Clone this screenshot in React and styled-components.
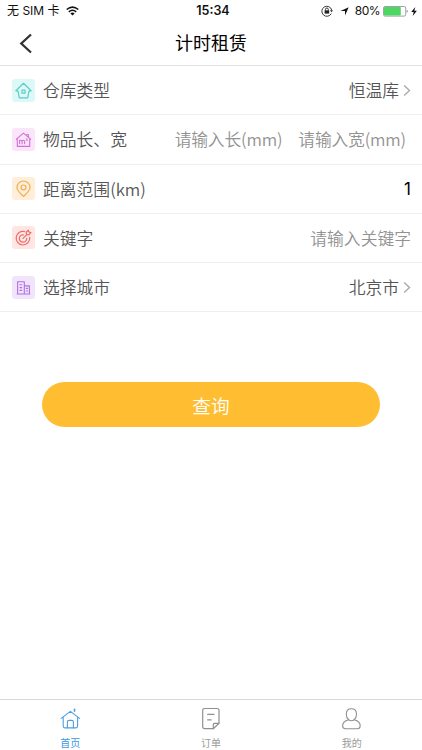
import React from "react";
import styled, { createGlobalStyle } from "styled-components";

const HouseIcon = () => (
  <svg width="17" height="17" viewBox="0 0 17 17" fill="none" stroke="#5fccc8" strokeWidth="1.2" strokeLinejoin="round" strokeLinecap="round">
    <path d="M.9 8.8 8.5 1.3 16.1 8.8 13.9 9.1 12.7 15.9H4.3L3.1 9.1Z" />
    <rect x="7" y="8.2" width="3" height="3" />
  </svg>
);

const AreaIcon = () => (
  <svg width="17" height="17" viewBox="0 0 17 17" fill="none" stroke="#d46fd8" strokeWidth="1.1" strokeLinejoin="round" strokeLinecap="round">
    <path d="M1.4 8.2 8.5 2.2 15.6 8.2M2.3 7.6V15.4H14.7V7.6M11.9 3.5H13.3V6" />
    <path d="M4.6 12.8V9.2M4.6 10.4Q4.9 9.2 5.9 9.2T7.1 10.4V12.8M7.1 10.4Q7.4 9.2 8.4 9.2T9.6 10.4V12.8" />
    <path d="M11.1 7.9H12.3L11.3 9.5H12.4" strokeWidth="0.8" />
  </svg>
);

const PinIcon = () => (
  <svg width="17" height="17" viewBox="0 0 17 17" fill="none" stroke="#f0ae4f" strokeWidth="1.2" strokeLinejoin="round">
    <path d="M8.5 16.4C5.2 13.2 2 10.6 2 7.4A6.5 6.4 0 0 1 15 7.4C15 10.6 11.8 13.2 8.5 16.4Z" />
    <circle cx="8.5" cy="7.4" r="2.4" />
  </svg>
);

const TargetIcon = () => (
  <svg width="17" height="17" viewBox="0 0 17 17" fill="none" stroke="#ee6c6c" strokeWidth="1.2" strokeLinejoin="round" strokeLinecap="round">
    <path d="M9.6 2.6A6.8 6.8 0 1 0 14.7 8.4" />
    <path d="M8.4 5.8A3.7 3.7 0 1 0 11.7 9.4" />
    <path d="M8 9.3 12 5.3M11.5 5.5 11.2 3.2 13.3 1.2 13.9 3 15.9 3.6 13.8 5.8Z" />
  </svg>
);

const CityIcon = () => (
  <svg width="17" height="17" viewBox="0 0 17 17" fill="none" stroke="#b270e0" strokeWidth="1.1" strokeLinejoin="round">
    <path d="M2.6 15V2.7H9.3V15M9.3 6.9H14.4V15M1.8 15H15.2" />
    <path d="M4.5 5.8H7.2M4.5 8.6H7.2M4.5 11.4H7.2M10.8 9.4H13M10.8 12H13" />
  </svg>
);

const WifiIcon = () => (
  <svg width="13" height="10" viewBox="0 0 13 10" fill="none" stroke="#111" strokeWidth="1.6">
    <path d="M.7 3.5Q6.5-1.3 12.3 3.5M2.8 5.8Q6.5 2.7 10.2 5.8" />
    <path d="M4.4 7.4Q6.5 5.7 8.6 7.4L6.5 9.6Z" fill="#111" stroke="none" />
  </svg>
);

const LockIcon = () => (
  <svg width="12" height="12" viewBox="0 0 12 12" fill="none" stroke="#222">
    <path d="M10.3 8.6A5 5 0 1 1 10.7 5" strokeWidth="0.9" />
    <path d="M9 5.2H12L10.5 7.2Z" fill="#222" stroke="none" />
    <rect x="3.6" y="5.3" width="4.6" height="3.3" fill="#222" stroke="none" />
    <path d="M4.5 5.5V4.4A1.4 1.4 0 0 1 7.3 4.4V5.5" strokeWidth="0.9" />
  </svg>
);

const BatteryIcon = () => (
  <svg width="26" height="11" viewBox="0 0 26 11">
    <rect x="0.5" y="0.5" width="22.2" height="9.6" rx="1.5" fill="#fff" stroke="#8a8a8a" strokeWidth="0.8" />
    <rect x="1" y="1" width="16.8" height="8.6" rx="0.8" fill="#4cd764" />
    <path d="M23.8 3.6Q25.6 5.3 23.8 7Z" fill="#555" />
  </svg>
);

const HomeIcon = () => (
  <svg width="22" height="24" viewBox="0 0 22 24" fill="none" stroke="#4a9fe3" strokeWidth="1.1" strokeLinejoin="round" strokeLinecap="round">
    <path d="M2.2 11.4 11.4 4.4 20.6 11.4M4.2 10.1V19.3Q4.2 20.9 5.8 20.9H17Q18.6 20.9 18.6 19.3V10.1" />
    <path d="M8.4 20.8V15Q8.4 13.4 10 13.4H12.8Q14.4 13.4 14.4 15V20.8" />
    <path d="M15.5 2.3V4.2" strokeWidth="1.5" />
  </svg>
);

const OrderIcon = () => (
  <svg width="22" height="24" viewBox="0 0 22 24" fill="none" stroke="#909090" strokeWidth="1.2" strokeLinejoin="round" strokeLinecap="round">
    <path d="M13.3 21.7H4.7Q2.7 21.7 2.7 19.7V3.5Q2.7 1.5 4.7 1.5H17Q19 1.5 19 3.5V16.3Z" />
    <path d="M13.3 21.7V17.5Q13.3 16.3 14.5 16.3H19M7.6 7.3H14.1M7.6 12.8H11.2" />
  </svg>
);

const UserIcon = () => (
  <svg width="22" height="24" viewBox="0.6 0 22 24" fill="none" stroke="#909090" strokeWidth="1.1" strokeLinejoin="round">
    <path d="M8.2 12.8C6.6 11.5 5.9 9.4 5.9 7.2C5.9 3.8 8 1.8 11 1.8S16.1 3.8 16.1 7.2C16.1 9.4 15.4 11.5 13.8 12.8C17.5 13.9 19.8 16 19.8 18.7C19.8 20.7 18.9 21.7 17 21.7H5C3.1 21.7 2.2 20.7 2.2 18.7C2.2 16 4.5 13.9 8.2 12.8Z" />
    <path d="M8.2 12.8Q11 14.8 13.8 12.8" />
  </svg>
);

const Chevron = () => (
  <svg width="8" height="13" viewBox="0 0 8 13" fill="none" stroke="#aaa" strokeWidth="1.4">
    <path d="M1.2 1.5 6.5 6.5 1.2 11.5" />
  </svg>
);

const App = () => {
  return (
    <Page>
      <GlobalStyle />
      <StatusBar>
        <StatusLeft>
          <span>无 SIM 卡</span>
          <WifiIcon />
        </StatusLeft>
        <Clock>15:34</Clock>
        <StatusRight>
          <LockIcon />
          <svg className="arrow" width="9" height="9" viewBox="0 0 9 9">
            <path d="M8.7.3 5 8.5V4H.5Z" fill="#111" />
          </svg>
          <span>80%</span>
          <BatteryIcon />
          <svg className="bolt" width="6" height="9" viewBox="0 0 6 9">
            <path d="M4.3 0 .2 5H2.7L1.7 9 5.9 3.8H3.3Z" fill="#111" />
          </svg>
        </StatusRight>
      </StatusBar>
      <Header>
        <BackButton aria-label="返回">
          <svg width="14" height="21" viewBox="0 0 14 21" fill="none" stroke="#333" strokeWidth="2.3">
            <path d="M12 1.5 2.3 10.5 12 19.5" />
          </svg>
        </BackButton>
        <h1>计时租赁</h1>
      </Header>
      <Form>
        <Row>
          <Tile $color="#dcf9f8"><HouseIcon /></Tile>
          <Label>仓库类型</Label>
          <Value>恒温库</Value>
          <Chevron />
        </Row>
        <Row>
          <Tile $color="#fbe5fa"><AreaIcon /></Tile>
          <Label>物品长、宽</Label>
          <Sizes>
            <Hint>请输入长(mm)</Hint>
            <Hint>请输入宽(mm)</Hint>
          </Sizes>
        </Row>
        <Row>
          <Tile $color="#ffeed9"><PinIcon /></Tile>
          <Label>距离范围(km)</Label>
          <Distance>1</Distance>
        </Row>
        <Row>
          <Tile $color="#ffe6e3"><TargetIcon /></Tile>
          <Label>关键字</Label>
          <Hint>请输入关键字</Hint>
        </Row>
        <Row>
          <Tile $color="#f1e4fd"><CityIcon /></Tile>
          <Label>选择城市</Label>
          <Value>北京市</Value>
          <Chevron />
        </Row>
      </Form>
      <SearchButton>查询</SearchButton>
      <TabBar>
        <Tab $active>
          <HomeIcon />
          <span>首页</span>
        </Tab>
        <Tab>
          <OrderIcon />
          <span>订单</span>
        </Tab>
        <Tab>
          <UserIcon />
          <span>我的</span>
        </Tab>
      </TabBar>
    </Page>
  );
};

const GlobalStyle = createGlobalStyle`
  * {
    box-sizing: border-box;
  }
  body {
    margin: 0;
    background: #fff;
    font-family: "Noto Sans CJK SC", sans-serif;
    font-weight: 350;
  }
`;

const Page = styled.div`
  display: flex;
  flex-direction: column;
  width: 422px;
  height: 750px;
  overflow: hidden;
  background: #fff;
`;

const StatusBar = styled.div`
  display: grid;
  grid-template-columns: 1fr auto 1fr;
  align-items: center;
  height: 22px;
  padding: 0 5px 0 7px;
  color: #111;
  font-family: Inter, "Noto Sans CJK SC", sans-serif;
  font-size: 12px;
  font-weight: 400;
  line-height: 22px;
`;

const StatusLeft = styled.div`
  display: flex;
  align-items: center;
  gap: 6px;
`;

const Clock = styled.span`
  padding-left: 2px;
  font-weight: 600;
  font-size: 12.5px;
`;

const StatusRight = styled.div`
  display: flex;
  align-items: center;
  justify-content: flex-end;
  .arrow {
    margin: 0 6px 0 7px;
  }
  span {
    margin-right: 3px;
    letter-spacing: -0.5px;
  }
  .bolt {
    margin-left: 2px;
  }
`;

const Header = styled.header`
  display: grid;
  grid-template-columns: 60px 1fr 60px;
  align-items: center;
  height: 44px;
  border-bottom: 1px solid #e2e2e2;
  h1 {
    margin: 0;
    padding-bottom: 3px;
    color: #000;
    font-size: 18px;
    font-weight: 400;
    line-height: 26px;
    text-align: center;
  }
`;

const BackButton = styled.button`
  display: flex;
  padding: 0 0 1px 19px;
  border: 0;
  background: none;
`;

const Form = styled.div`
  display: flex;
  flex-direction: column;
`;

const Row = styled.div`
  display: flex;
  align-items: center;
  height: 49.25px;
  padding: 0 11px 0 12px;
  border-bottom: 1px solid #efeff2;
  font-size: 16.8px;
  line-height: 24px;
`;

const Tile = styled.span`
  display: flex;
  align-items: center;
  justify-content: center;
  width: 23px;
  height: 23px;
  margin-right: 8px;
  border-radius: 3px;
  background: ${({ $color }) => $color};
`;

const Label = styled.span`
  flex: 1;
  color: #555;
`;

const Value = styled.span`
  margin-right: 4px;
  color: #555;
`;

const Sizes = styled.div`
  display: flex;
  gap: 16px;
  padding-right: 5px;
  letter-spacing: -0.18px;
`;

const Hint = styled.span`
  color: #929292;
`;

const Distance = styled.span`
  color: #000;
  font-family: Inter, sans-serif;
  font-size: 17px;
  font-weight: 400;
`;

const SearchButton = styled.button`
  width: 338px;
  height: 45px;
  margin: 70px auto 0 42px;
  border: 0;
  border-radius: 23px;
  background: #ffbe32;
  color: #fff;
  font-family: inherit;
  font-size: 18.7px;
  font-weight: 350;
  line-height: 27px;
`;

const TabBar = styled.nav`
  display: grid;
  grid-template-columns: repeat(3, 1fr);
  height: 51px;
  margin-top: auto;
  border-top: 1px solid #d8d8d8;
`;

const Tab = styled.div`
  display: flex;
  flex-direction: column;
  align-items: center;
  padding-top: 7px;
  color: ${({ $active }) => ($active ? "#3c98e0" : "#9a9a9a")};
  font-size: 10px;
  font-weight: 400;
  line-height: 14px;
  span {
    margin-top: 5px;
  }
`;

export default App;
